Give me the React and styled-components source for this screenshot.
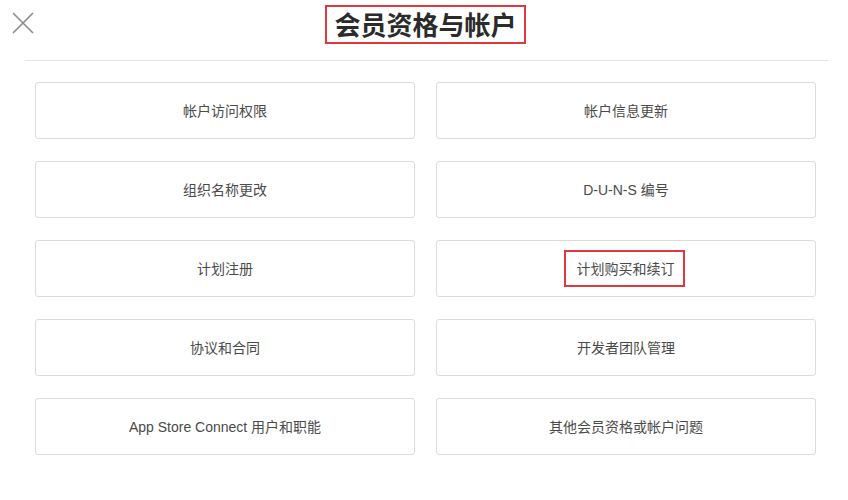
import React from 'react'
import styled, { createGlobalStyle } from 'styled-components'

const GlobalStyle = createGlobalStyle`
  html, body {
    margin: 0;
    padding: 0;
    background: #ffffff;
  }
  body {
    font-family: "Liberation Sans", "Noto Sans CJK SC", sans-serif;
    color: #333;
  }
`

const Page = styled.div`
  width: 848px;
  height: 500px;
  position: relative;
  overflow: hidden;
`

const Header = styled.header`
  height: 60px;
  margin: 0 20px 0 25px;
  border-bottom: 1px solid #e3e3e3;
  display: flex;
  align-items: flex-start;
  justify-content: center;
  position: relative;
`

const CloseButton = styled.button`
  position: absolute;
  left: -14px;
  top: 11px;
  width: 24px;
  height: 24px;
  padding: 0;
  border: none;
  background: none;
  cursor: pointer;
`

const Title = styled.h1`
  margin: 5px 0 0 -2px;
  padding: 2px 7px 3px;
  font-family: "Noto Sans CJK SC", sans-serif;
  font-size: 26px;
  font-weight: 700;
  line-height: 30px;
  color: #2b2b2b;
  border: 2px solid #e0383e;
`

const Grid = styled.div`
  display: grid;
  grid-template-columns: 380px 380px;
  grid-auto-rows: 57px;
  column-gap: 21px;
  row-gap: 22px;
  padding: 21px 0 0 35px;
`

const Card = styled.button`
  display: flex;
  align-items: center;
  justify-content: center;
  border: 1px solid #dcdcdc;
  border-radius: 3px;
  background: #fff;
  font-family: "Liberation Sans", "Noto Sans CJK SC", sans-serif;
  font-size: 14px;
  color: #4a4a4a;
  cursor: pointer;
`

const Label = styled.span`
  display: inline-block;
  line-height: 20px;
  padding: ${p => (p.$marked ? '7px 8px 6px 11px' : '0')};
  border: ${p => (p.$marked ? '2px solid #e0383e' : 'none')};
  margin-left: ${p => (p.$marked ? '-4px' : '0')};
`

const items = [
  ['帐户访问权限', '帐户信息更新'],
  ['组织名称更改', 'D-U-N-S 编号'],
  ['计划注册', '计划购买和续订'],
  ['协议和合同', '开发者团队管理'],
  ['App Store Connect 用户和职能', '其他会员资格或帐户问题'],
]

export default function App() {
  return (
    <Page>
      <GlobalStyle />
      <Header>
        <CloseButton aria-label="close">
          <svg width="24" height="24" viewBox="0 0 24 24">
            <path d="M2 2 L22 22 M22 2 L2 22" stroke="#8a8a8a" strokeWidth="1.6" fill="none" />
          </svg>
        </CloseButton>
        <Title>会员资格与帐户</Title>
      </Header>
      <Grid>
        {items.flat().map(text => (
          <Card key={text}>
            <Label $marked={text === '计划购买和续订'}>{text}</Label>
          </Card>
        ))}
      </Grid>
    </Page>
  )
}
